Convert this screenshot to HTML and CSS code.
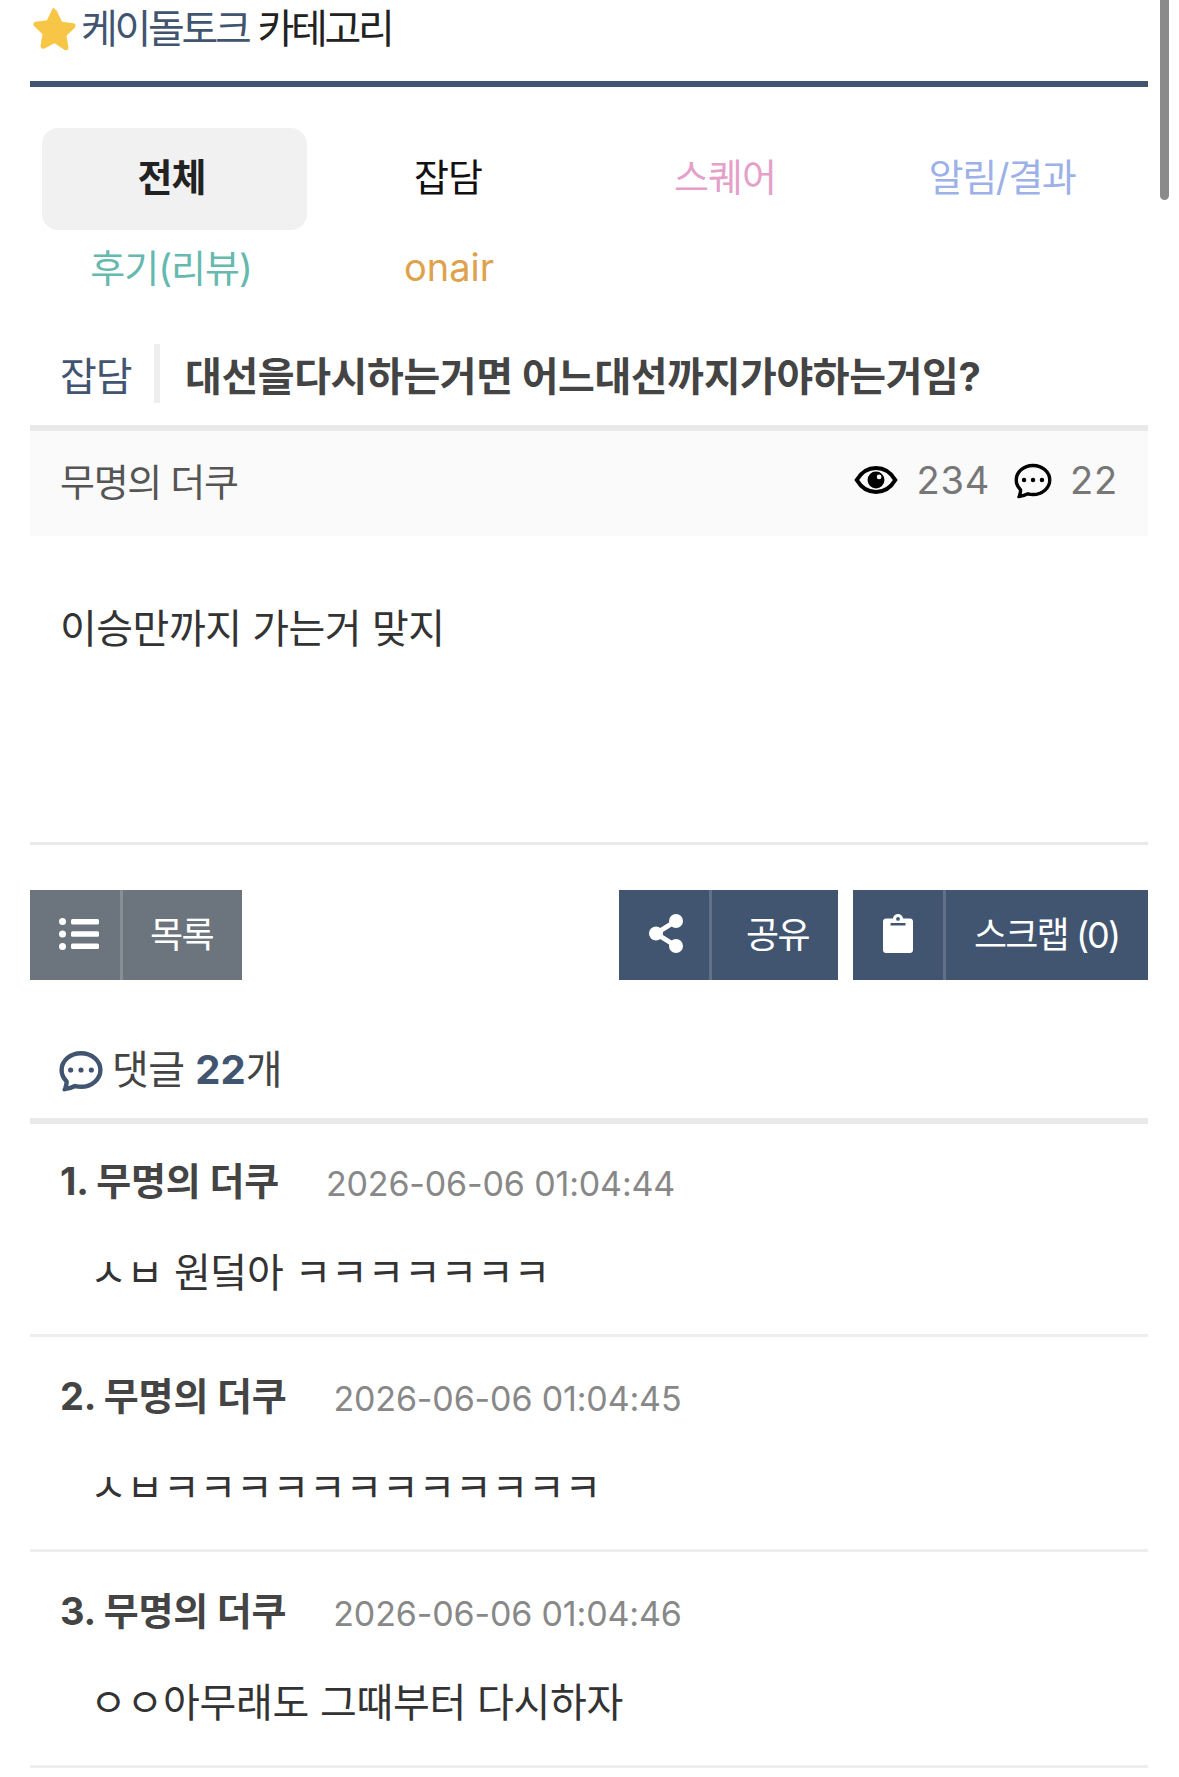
FILE: index.html
```html
<!DOCTYPE html>
<html lang="ko">
<head>
<meta charset="utf-8">
<title>케이돌토크 카테고리</title>
<link rel="stylesheet" href="styles.css">
</head>
<body>
<div class="page">
  <header class="cat-head">
    <svg class="star" viewBox="0 0 24 24"><path d="M12 1.200c.6 0 1 .4 1.300 1l2.700 5.600 6 .9c1.300.2 1.700 1.400.8 2.300l-4.400 4.300 1 6.100c.2 1.300-.9 2-2 1.500L12 19.300l-5.400 2.800c-1.100.5-2.200-.2-2-1.500l1-6.100L1.200 10.200c-.9-.9-.5-2.100.8-2.300l6-.9 2.700-5.600c.3-.6.7-1 1.300-1z"/></svg>
    <span class="brand">케이돌토크</span><span class="brand-sub">카테고리</span>
  </header>
  <nav class="tabs">
    <a class="tab tab-active">전체</a>
    <a class="tab tab-black">잡담</a>
    <a class="tab tab-pink">스퀘어</a>
    <a class="tab tab-blue">알림/결과</a>
    <a class="tab tab-teal">후기(리뷰)</a>
    <a class="tab tab-orange">onair</a>
  </nav>
  <div class="title-row">
    <span class="title-cat">잡담</span>
    <h1 class="title">대선을다시하는거면 어느대선까지가야하는거임?</h1>
  </div>
  <div class="meta">
    <span class="author">무명의 더쿠</span>
    <span class="stats">
      <svg class="eye" viewBox="0 0 24 16"><path class="eye-line" d="M1.500 8C4 3.800 7.700 1.500 12 1.500S20 3.800 22.500 8C20 12.200 16.300 14.500 12 14.500S4 12.200 1.500 8z"/><circle cx="12" cy="8" r="4.600"/><circle class="eye-glint" cx="13.700" cy="6.300" r="1.300"/></svg>
      <span class="num">234</span>
      <svg class="chat" viewBox="-0.5 -0.5 17 17"><path d="M5 8a1 1 0 1 1-2 0 1 1 0 0 1 2 0zm4 0a1 1 0 1 1-2 0 1 1 0 0 1 2 0zm3 1a1 1 0 1 0 0-2 1 1 0 0 0 0 2z"/><path class="chat-outline" d="m2.165 15.803.02-.004c1.830-.363 2.948-.842 3.468-1.105A9.060 9.060 0 0 0 8 15c4.418 0 8-3.134 8-7s-3.582-7-8-7-8 3.134-8 7c0 1.760.743 3.370 1.970 4.600a10.437 10.437 0 0 1-.524 2.318l-.003.011a10.722 10.722 0 0 1-.244.637c-.079.186.074.394.273.362a21.673 21.673 0 0 0 .693-.125zm.8-3.108a1 1 0 0 0-.287-.801C1.618 10.830 1 9.468 1 8c0-3.192 3.004-6 7-6s7 2.808 7 6c0 3.193-3.004 6-7 6a8.060 8.060 0 0 1-2.088-.272 1 1 0 0 0-.711.074c-.387.196-1.240.570-2.634.893a10.970 10.970 0 0 0 .398-2z"/></svg>
      <span class="num">22</span>
    </span>
  </div>
  <div class="content">이승만까지 가는거 맞지</div>
  <div class="actions">
    <a class="btn btn-gray">
      <span class="btn-icon btn-icon-list"><svg class="ico-list" viewBox="0 0 40 32"><circle cx="3.500" cy="3.500" r="3.500"/><circle cx="3.500" cy="16" r="3.500"/><circle cx="3.500" cy="28.500" r="3.500"/><rect x="12" y="1" width="28" height="5.500" rx="1.500"/><rect x="12" y="13.200" width="28" height="5.500" rx="1.500"/><rect x="12" y="25.500" width="28" height="5.500" rx="1.500"/></svg></span>
      <span class="btn-text btn-text-list">목록</span>
    </a>
    <span class="spacer"></span>
    <a class="btn btn-navy btn-share">
      <span class="btn-icon btn-icon-share"><svg class="ico-share" viewBox="0 0 34 39"><circle cx="27" cy="7" r="7"/><circle cx="27" cy="32" r="7"/><circle cx="7" cy="19.500" r="7"/><path class="share-link" d="M27 7 7 19.500 27 32"/></svg></span>
      <span class="btn-text btn-text-share">공유</span>
    </a>
    <a class="btn btn-navy btn-scrap">
      <span class="btn-icon"><svg class="ico-clip" viewBox="0 0 30 39"><path fill-rule="evenodd" d="M15 0c2.600 0 4.700 1.800 5.200 4.500H27c1.700 0 3 1.300 3 3V36c0 1.700-1.300 3-3 3H3c-1.700 0-3-1.300-3-3V7.500c0-1.700 1.300-3 3-3h6.800C10.300 1.800 12.400 0 15 0zm0 3a1.900 1.900 0 1 0 0 3.800A1.900 1.900 0 0 0 15 3zM7.500 9v2.500h15V9z"/></svg></span>
      <span class="btn-text btn-text-scrap">스크랩 (0)</span>
    </a>
  </div>
  <div class="comments-head">
    <svg class="chat-blue" viewBox="-0.5 -0.5 17 17"><g transform="matrix(-1 0 0 1 16 0)"><path d="M5 8a1 1 0 1 1-2 0 1 1 0 0 1 2 0zm4 0a1 1 0 1 1-2 0 1 1 0 0 1 2 0zm3 1a1 1 0 1 0 0-2 1 1 0 0 0 0 2z"/></g><path class="chat-outline-blue" d="m2.165 15.803.02-.004c1.830-.363 2.948-.842 3.468-1.105A9.060 9.060 0 0 0 8 15c4.418 0 8-3.134 8-7s-3.582-7-8-7-8 3.134-8 7c0 1.760.743 3.370 1.970 4.600a10.437 10.437 0 0 1-.524 2.318l-.003.011a10.722 10.722 0 0 1-.244.637c-.079.186.074.394.273.362a21.673 21.673 0 0 0 .693-.125zm.8-3.108a1 1 0 0 0-.287-.801C1.618 10.830 1 9.468 1 8c0-3.192 3.004-6 7-6s7 2.808 7 6c0 3.193-3.004 6-7 6a8.060 8.060 0 0 1-2.088-.272 1 1 0 0 0-.711.074c-.387.196-1.240.570-2.634.893a10.970 10.970 0 0 0 .398-2z"/></svg>
    <span class="comments-label">댓글 <b class="count">22</b>개</span>
  </div>
  <article class="comment">
    <div class="c-head"><b class="c-name">1. 무명의 더쿠</b><span class="c-date">2026-06-06 01:04:44</span></div>
    <p class="c-body">ㅅㅂ 원덬아 ㅋㅋㅋㅋㅋㅋㅋ</p>
  </article>
  <article class="comment">
    <div class="c-head"><b class="c-name">2. 무명의 더쿠</b><span class="c-date">2026-06-06 01:04:45</span></div>
    <p class="c-body">ㅅㅂㅋㅋㅋㅋㅋㅋㅋㅋㅋㅋㅋㅋ</p>
  </article>
  <article class="comment">
    <div class="c-head"><b class="c-name">3. 무명의 더쿠</b><span class="c-date">2026-06-06 01:04:46</span></div>
    <p class="c-body">ㅇㅇ아무래도 그때부터 다시하자</p>
  </article>
</div>
<div class="scrollbar"></div>
</body>
</html>
```

FILE: styles.css
```css
* { box-sizing: border-box; }
html, body { margin: 0; padding: 0; background: #fff; }
body {
  width: 1179px;
  height: 1777px;
  overflow: hidden;
  position: relative;
  font-family: Inter, "Noto Sans CJK KR", "Noto Sans", sans-serif;
  color: #333;
}
.page { padding: 0 31px 0 30px; }
.scrollbar {
  position: absolute;
  top: 0;
  left: 1160px;
  width: 9px;
  height: 200px;
  background: #8a8a8a;
  border-radius: 0 0 5px 5px;
}
.cat-head {
  height: 87px;
  padding: 7px 0 0 2px;
  display: flex;
  align-items: flex-start;
  border-bottom: 6px solid #415570;
  font-size: 40px;
  line-height: 44px;
  letter-spacing: -3.300px;
}
.star { width: 45px; height: 45px; fill: #f7c646; flex: none; margin-right: 4px; }
.brand { color: #415570; margin-right: 9px; }
.brand-sub { color: #222; }
.tabs {
  display: grid;
  grid-template-columns: repeat(4, 277px);
  grid-auto-rows: 90px;
  padding: 41px 0 0 12px;
  height: 255px;
  font-size: 38px;
  letter-spacing: -1px;
}
.tab {
  display: flex;
  align-items: center;
  justify-content: center;
  width: 265px;
  height: 102px;
  padding: 0 7px 9px 0;
}
.tab-active { background: #f1f1f1; border-radius: 16px; font-weight: 700; color: #222; padding-right: 6px; }
.tab-black { color: #111; }
.tab-pink { color: #e5a0c9; }
.tab-blue { color: #9db1e9; letter-spacing: -1.400px; }
.tab-teal { color: #65b9ae; height: 76px; margin-top: 12px; padding-bottom: 6px; }
.tab-orange { color: #dfa24c; height: 76px; margin-top: 12px; padding: 0 5px 2px 0; letter-spacing: 0; }
.title-row {
  display: flex;
  align-items: center;
  height: 83px;
  padding: 2px 0 22px 30px;
}
.title-cat {
  font-size: 40px;
  letter-spacing: -1.100px;
  color: #415570;
  width: 100px;
  height: 59px;
  line-height: 65px;
  border-right: 6px solid #eee;
  flex: none;
}
.title {
  margin: 0 0 0 25px;
  font-size: 40px;
  font-weight: 700;
  color: #444;
  letter-spacing: -.400px;
  white-space: nowrap;
}
.meta {
  height: 111px;
  border-top: 6px solid #e9e9e9;
  background: #fafafa;
  padding: 0 30px 9px;
  display: flex;
  align-items: center;
  justify-content: space-between;
  font-size: 38px;
  letter-spacing: -1.300px;
}
.author { color: #555; }
.stats { display: flex; align-items: center; color: #777; letter-spacing: .800px; padding-top: 2px; }
.eye { width: 44px; height: 30px; margin-right: 18px; }
.eye-line { fill: none; stroke: #000; stroke-width: 2.200px; }
.eye-glint { fill: #fafafa; }
.chat { width: 42px; height: 38px; margin: 0 16px 0 22px; }
.chat-outline { stroke: #000; stroke-width: .5px; }
.num { font-size: 38px; }
.content {
  height: 309px;
  padding-top: 65px;
  border-bottom: 3px solid #e9e9e9;
  font-size: 40px;
  line-height: 56px;
  padding-left: 30px;
  letter-spacing: -.500px;
  color: #333;
}
.actions { display: flex; margin-top: 45px; height: 90px; }
.spacer { flex: 1; }
.btn { display: flex; height: 90px; color: #fff; fill: #fff; font-size: 36px; letter-spacing: -1.500px; }
.btn-gray { background: #6c757d; width: 212px; }
.btn-navy { background: #415570; }
.btn-share { width: 219px; margin-right: 15px; }
.btn-scrap { width: 295px; }
.btn-icon {
  width: 93px;
  flex: none;
  display: flex;
  align-items: center;
  justify-content: center;
  padding-bottom: 3px;
  border-right: 3px solid #61718a;
}
.btn-icon-list { border-right-color: #868e96; padding-left: 8px; }
.btn-icon-share { padding-left: 4px; }
.btn-text { display: flex; align-items: center; flex: 1; padding-bottom: 7px; }
.btn-text-list { padding-left: 27px; }
.btn-text-share { padding-left: 34px; }
.btn-text-scrap { padding-left: 28px; letter-spacing: -1.900px; }
.ico-list { width: 40px; height: 32px; }
.ico-share { width: 34px; height: 39px; }
.share-link { fill: none; stroke: #fff; stroke-width: 5px; }
.ico-clip { width: 30px; height: 39px; }
.comments-head {
  height: 144px;
  padding: 42px 0 0 30px;
  display: flex;
  align-items: center;
  border-bottom: 6px solid #e9e9e9;
  font-size: 40px;
  letter-spacing: -.500px;
  color: #444;
}
.comments-label { margin-bottom: 7px; }
.chat-blue { width: 48px; height: 44px; fill: #415570; margin: 0 7px 0 -3px; flex: none; }
.chat-outline-blue { stroke: #415570; stroke-width: .7px; }
.count { color: #415570; font-weight: 700; letter-spacing: 0; }
.comment { height: 215px; border-bottom: 3px solid #eee; padding: 35px 0 0 30px; }
.comment:first-of-type { height: 213px; padding-top: 33px; }
.comment:last-of-type { height: 216px; }
.c-head { display: flex; align-items: center; height: 50px; }
.c-name { font-size: 38px; font-weight: 700; color: #444; letter-spacing: -.200px; margin-bottom: 7px; }
.c-date { font-size: 34px; color: #888; margin: 2px 0 0 47px; letter-spacing: -.150px; }
.c-body { margin: 40px 0 0 30px; font-size: 40px; line-height: 52px; color: #333; letter-spacing: -.300px; }
```
